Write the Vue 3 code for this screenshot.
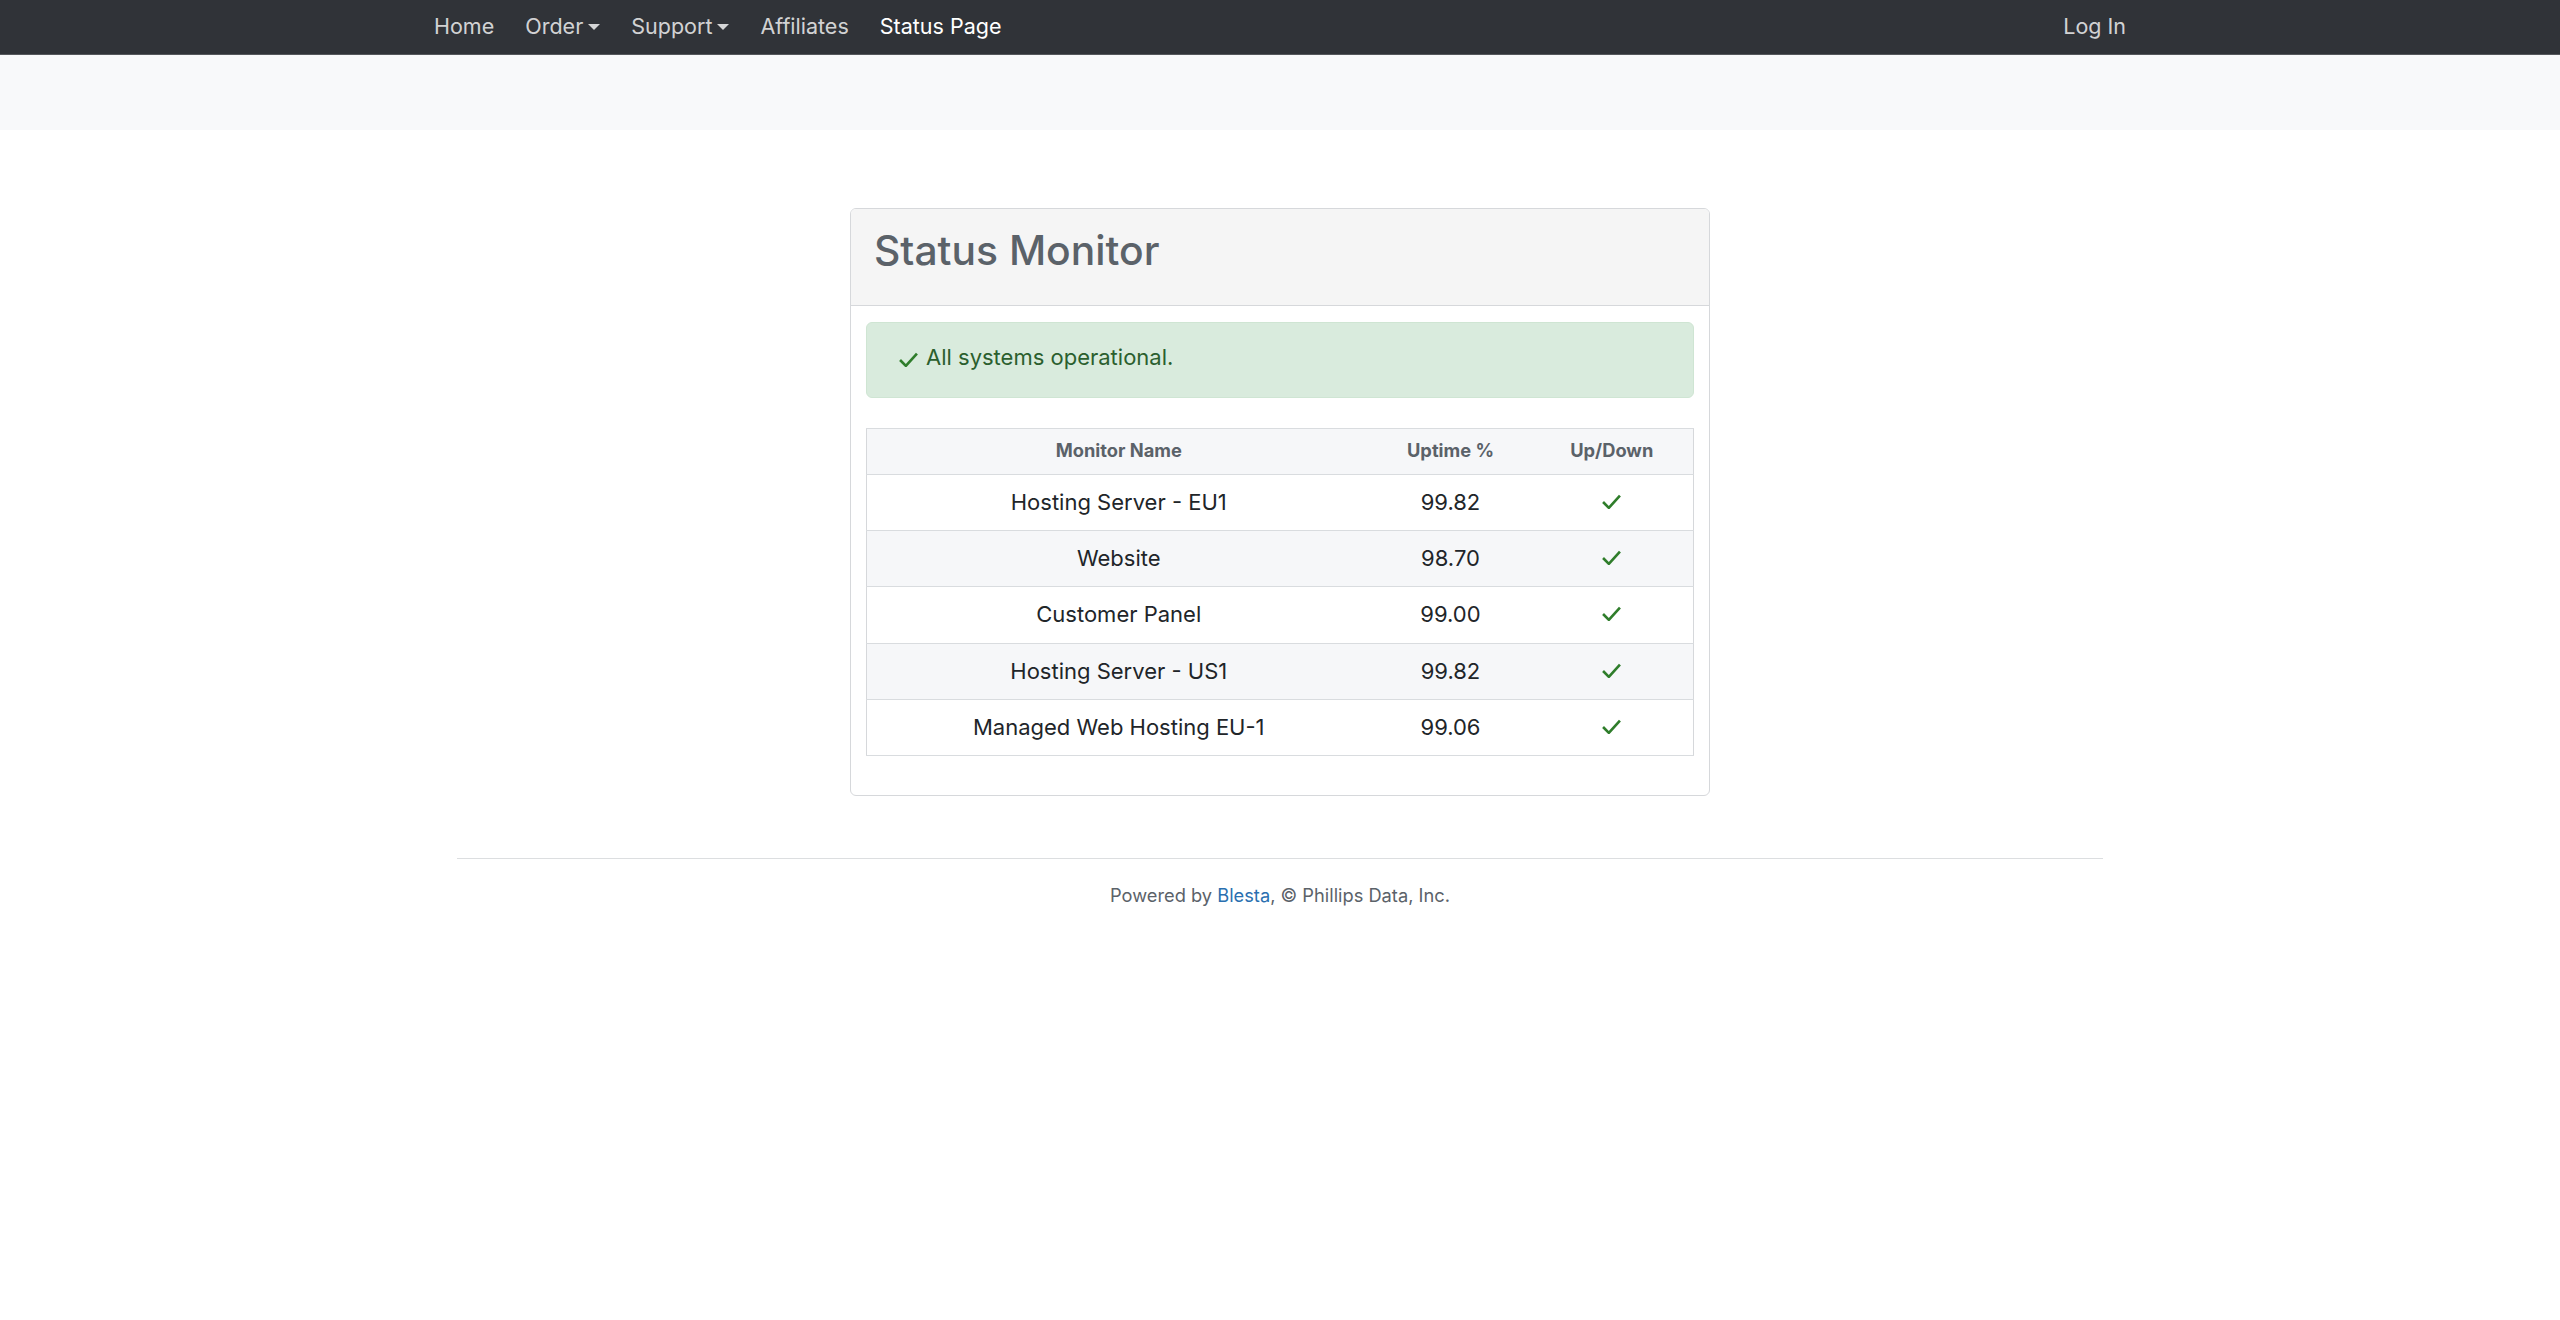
<script setup>
const monitors = [
  { name: 'Hosting Server - EU1', uptime: '99.82' },
  { name: 'Website', uptime: '98.70' },
  { name: 'Customer Panel', uptime: '99.00' },
  { name: 'Hosting Server - US1', uptime: '99.82' },
  { name: 'Managed Web Hosting EU-1', uptime: '99.06' }
]
</script>

<template>
  <div class="page">
    <nav class="topnav">
      <div class="nav-inner">
        <div class="nav-left">
          <a class="nav-link">Home</a>
          <a class="nav-link caret">Order</a>
          <a class="nav-link caret">Support</a>
          <a class="nav-link">Affiliates</a>
          <a class="nav-link active">Status Page</a>
        </div>
        <a class="nav-link">Log In</a>
      </div>
    </nav>
    <div class="subheader"></div>

    <main class="main">
      <section class="card">
        <header class="card-header">
          <h3>Status Monitor</h3>
        </header>
        <div class="card-body">
          <div class="alert">
            <svg class="check" viewBox="0 0 18 14" width="19" height="15"><path d="M1 7.5 6.5 13 17 1.5" /></svg>
            <span>All systems operational.</span>
          </div>
          <table class="table">
            <colgroup>
              <col class="c1" />
              <col class="c2" />
              <col class="c3" />
            </colgroup>
            <thead>
              <tr>
                <th>Monitor Name</th>
                <th>Uptime %</th>
                <th>Up/Down</th>
              </tr>
            </thead>
            <tbody>
              <tr v-for="m in monitors" :key="m.name">
                <td>{{ m.name }}</td>
                <td>{{ m.uptime }}</td>
                <td>
                  <svg class="check" viewBox="0 0 18 14" width="19" height="15"><path d="M1 7.5 6.5 13 17 1.5" /></svg>
                </td>
              </tr>
            </tbody>
          </table>
        </div>
      </section>

      <footer class="footer">
        Powered by <a class="blesta">Blesta</a>, © Phillips Data, Inc.
      </footer>
    </main>
  </div>
</template>

<style>
html, body { margin: 0; background: #fff; }
</style>

<style scoped>
.page {
  min-height: 1320px;
  font-family: Inter, "Liberation Sans", sans-serif;
  font-size: 22px;
  line-height: 1.5;
  color: #212529;
  background: #fff;
}
.topnav {
  height: 54px;
  background: #303338;
  border-bottom: 1px solid #55585c;
}
.nav-inner {
  width: 1692px;
  height: 100%;
  box-sizing: border-box;
  padding-bottom: 1px;
  margin: 0 auto;
  display: flex;
  align-items: center;
  justify-content: space-between;
}
.nav-left {
  display: flex;
  align-items: center;
  gap: 31px;
}
.nav-link {
  color: rgba(255, 255, 255, 0.8);
  white-space: nowrap;
  font-size: 21.5px;
}
.nav-link.active { color: #fff; }
.caret::after {
  content: "";
  display: inline-block;
  margin-left: 5px;
  vertical-align: 4px;
  border-top: 6.5px solid currentColor;
  border-left: 6.5px solid transparent;
  border-right: 6.5px solid transparent;
}
.subheader {
  height: 75px;
  background: #f8f9fa;
}
.main {
  display: flex;
  flex-direction: column;
  align-items: center;
  padding-top: 78px;
}
.card {
  width: 860px;
  box-sizing: border-box;
  height: 588px;
  border: 1px solid #d6d8db;
  border-radius: 6px;
  overflow: hidden;
}
.card-header {
  height: 97px;
  box-sizing: border-box;
  padding: 18px 23px;
  background: #f5f5f5;
  border-bottom: 1px solid #d6d8db;
}
h3 {
  margin: 0;
  font-size: 40.8px;
  line-height: 47px;
  font-weight: 500;
  color: #5b6269;
}
.card-body {
  padding: 15.5px 15px;
}
.alert {
  height: 76px;
  box-sizing: border-box;
  padding: 18px 31px;
  display: flex;
  align-items: flex-start;
  gap: 8px;
  background: #d9ebdd;
  border: 1px solid #cfe5d3;
  border-radius: 6px;
  color: #2b5f2e;
}
.alert .check { margin-top: 11px; margin-left: 1px; }
.check path {
  fill: none;
  stroke: #2f7d2b;
  stroke-width: 2.5;
}
.table {
  width: 100%;
  margin-top: 30px;
  table-layout: fixed;
  border-collapse: collapse;
  text-align: center;
  border-left: 1px solid #d6d8db;
  border-right: 1px solid #d6d8db;
}
.c1 { width: 504px; }
.c2 { width: 160px; }
.table th, .table td {
  padding: 0;
  border: 1px solid #d9dcdf;
  border-left: 0;
  border-right: 0;
}
.table th {
  height: 45px;
  font-size: 18.3px;
  font-weight: 700;
  color: #5b6269;
  background: #f6f7f9;
}
.table td { height: 55.4px; }
.table tbody tr:nth-child(even) td { background: #f6f7f9; }
.table .check { display: block; margin: -2px auto 0; }
.footer {
  width: 1646px;
  margin-top: 62px;
  border-top: 1px solid #dcdee0;
  padding-top: 23px;
  text-align: center;
  font-size: 18.25px;
  line-height: 27px;
  color: #5b6269;
}
.blesta { color: #2a6fb0; }
</style>
